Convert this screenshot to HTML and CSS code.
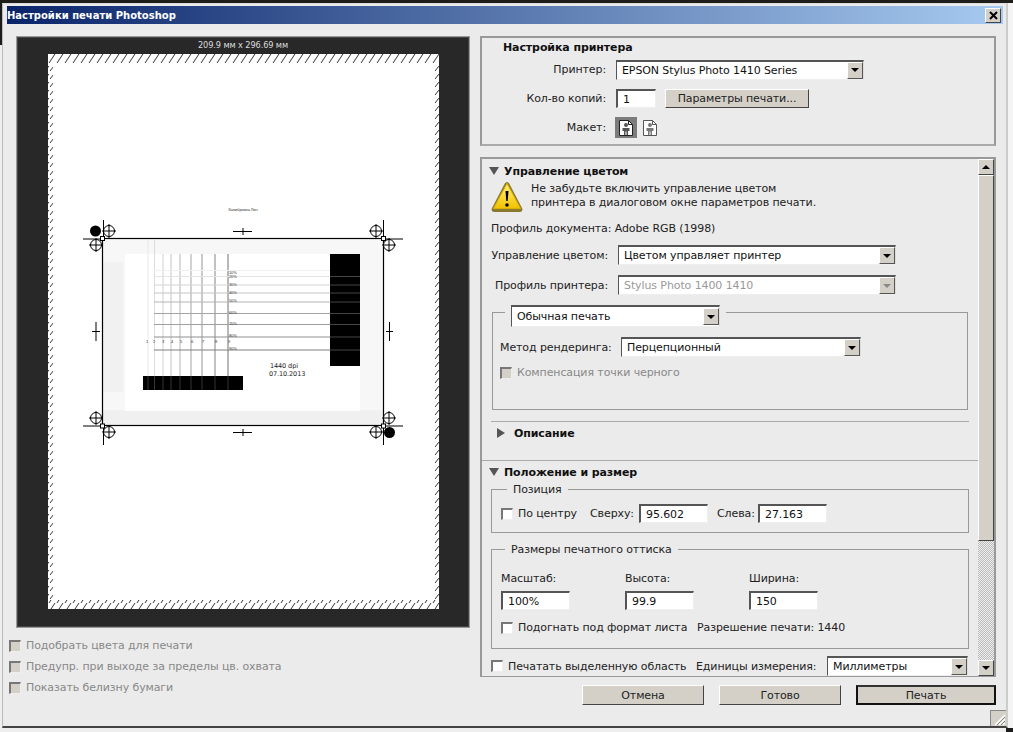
FILE: index.html
```html
<!DOCTYPE html>
<html lang="ru">
<head>
    <meta charset="UTF-8">
    <meta name="viewport" content="width=device-width, initial-scale=1.0">
    <title>Настройки печати Photoshop</title>
    <link rel="stylesheet" href="styles.css">
</head>
<body>

<div class="top-strip"></div>

<div class="window">
    <div class="title-bar">
        <span class="title-text">Настройки печати Photoshop</span>
        <div class="close-btn">
            <svg width="9" height="9" viewBox="0 0 9 9"><path d="M1 1L8 8M8 1L1 8" stroke="#000" stroke-width="2"/></svg>
        </div>
    </div>

    <div class="main">
        <!-- Предпросмотр -->
        <div class="left-col">
            <div class="preview">
                <div class="preview-size">209.9 мм x 296.69 мм</div>
                <svg class="paper" width="391" height="555" viewBox="48 54 391 555">
                    <defs>
                        <pattern id="hatchH" x="48" y="54" width="8" height="9" patternUnits="userSpaceOnUse">
                            <path d="M1 9L7 0" stroke="#000" stroke-width="0.800"/>
                        </pattern>
                        <pattern id="hatchV" x="0" y="64" width="5" height="8" patternUnits="userSpaceOnUse">
                            <path d="M0 7L4 2" stroke="#000" stroke-width="0.800"/>
                        </pattern>
                        <g id="cross">
                            <circle r="5.500" fill="#fff" stroke="#000"/>
                            <path d="M-7 0H7M0 -7V7" stroke="#000"/>
                        </g>
                        <rect id="corner" x="-2" y="-2" width="4" height="4" fill="#fff" stroke="#000"/>
                    </defs>

                    <rect x="48" y="54" width="391" height="555" fill="#fff"/>
                    <rect x="48" y="54" width="391" height="9" fill="url(#hatchH)"/>
                    <rect x="48" y="600" width="391" height="9" fill="url(#hatchH)"/>
                    <rect x="48" y="64" width="5" height="536" fill="url(#hatchV)"/>
                    <rect x="434" y="64" width="5" height="536" fill="url(#hatchV)"/>

                    <text class="tiny" x="243" y="211" text-anchor="middle">Калибровка-Лин</text>

                    <!-- отпечаток -->
                    <rect x="103" y="239" width="280" height="187" fill="#f7f7f7"/>
                    <rect x="103" y="262" width="20" height="130" fill="#f1f1f1"/>
                    <rect x="103" y="410" width="280" height="15" fill="#f0f0f0"/>
                    <rect x="125" y="254" width="235" height="157" fill="#fff"/>
                    <path d="M148 240V376" stroke="#e8e8e8"/>
                    <path d="M154.500 240V376" stroke="#dcdcdc"/>
                    <path d="M163 254V376" stroke="#d0d0d0"/>
                    <path d="M171 254V376" stroke="#c4c4c4"/>
                    <path d="M180 254V376" stroke="#b4b4b4"/>
                    <path d="M191 254V376" stroke="#a4a4a4"/>
                    <path d="M202 254V376" stroke="#949494"/>
                    <path d="M215 254V376" stroke="#848484"/>
                    <path d="M228 254V376" stroke="#707070"/>
                    <path d="M154 270.500H330" stroke="#f0f0f0"/>
                    <path d="M154 276.500H330" stroke="#e4e4e4"/>
                    <path d="M154 285H330" stroke="#d4d4d4"/>
                    <path d="M154 293H330" stroke="#c4c4c4"/>
                    <path d="M154 302H330" stroke="#b4b4b4"/>
                    <path d="M154 313.500H330" stroke="#a4a4a4"/>
                    <path d="M154 324.500H330" stroke="#a0a0a0"/>
                    <path d="M154 337H330" stroke="#909090"/>
                    <path d="M154 350H330" stroke="#808080"/>
                    <text class="tiny" x="146" y="343">1</text>
                    <text class="tiny" x="153" y="343">2</text>
                    <text class="tiny" x="162" y="343">3</text>
                    <text class="tiny" x="171" y="343">4</text>
                    <text class="tiny" x="180" y="343">5</text>
                    <text class="tiny" x="191" y="343">6</text>
                    <text class="tiny" x="202" y="343">7</text>
                    <text class="tiny" x="215" y="343">8</text>
                    <text class="tiny" x="228" y="343">9</text>
                    <text class="tiny" x="229" y="274">10%</text>
                    <text class="tiny" x="229" y="278">20%</text>
                    <text class="tiny" x="229" y="286">30%</text>
                    <text class="tiny" x="229" y="294">40%</text>
                    <text class="tiny" x="229" y="302">50%</text>
                    <text class="tiny" x="229" y="314">60%</text>
                    <text class="tiny" x="229" y="325">70%</text>
                    <text class="tiny" x="229" y="337">80%</text>
                    <text class="tiny" x="229" y="350">90%</text>
                    <rect x="330" y="254" width="30" height="112" fill="#000"/>
                    <path d="M330 276.500H360M330 285H360M330 293H360M330 302H360M330 313.500H360M330 324.500H360M330 337H360M330 350H360" stroke="#444"/>
                    <rect x="143" y="376" width="100" height="14" fill="#000"/>
                    <path d="M148 376V390M154.500 376V390M163 376V390M171 376V390M180 376V390M191 376V390M202 376V390M215 376V390M228 376V390" stroke="#333"/>
                    <text class="dpi" x="270" y="368">1440 dpi</text>
                    <text class="dpi" x="269" y="376">07.10.2013</text>
                    <rect x="102.500" y="238.500" width="281" height="187" fill="none" stroke="#000" stroke-width="1.200"/>

                    <!-- метки -->
                    <use href="#cross" x="109" y="231"/>
                    <use href="#cross" x="376" y="231"/>
                    <use href="#cross" x="96" y="245"/>
                    <use href="#cross" x="389" y="245"/>
                    <use href="#cross" x="96" y="418"/>
                    <use href="#cross" x="389" y="418"/>
                    <use href="#cross" x="109" y="432"/>
                    <use href="#cross" x="376" y="432"/>
                    <circle cx="95.500" cy="231" r="5.500" fill="#000"/>
                    <circle cx="389.500" cy="432.500" r="5.500" fill="#000"/>
                    <path d="M103.500 220V238M383.500 220V238M103.500 426V445M383.500 426V445M83 239H102M384 239H403M83 426H102M384 426H403" stroke="#000"/>
                    <path d="M233 231.500H252M243 228V235M233 432.500H252M243 429V436M96 322V341M92 331.500H100M389.500 322V341M386 331.500H393" stroke="#000"/>
                    <use href="#corner" x="102.500" y="238.500"/>
                    <use href="#corner" x="383.500" y="238.500"/>
                    <use href="#corner" x="102.500" y="426"/>
                    <use href="#corner" x="383.500" y="426"/>
                </svg>
            </div>
            <div class="check-row disabled"><span class="check"></span>Подобрать цвета для печати</div>
            <div class="check-row disabled"><span class="check"></span>Предупр. при выходе за пределы цв. охвата</div>
            <div class="check-row disabled"><span class="check"></span>Показать белизну бумаги</div>
        </div>

        <!-- Настройки -->
        <div class="right-col">
            <div class="printer-box">
                <div class="box-title">Настройка принтера</div>
                <div class="form-row">
                    <span class="label printer-label">Принтер:</span>
                    <div class="combo combo-printer">EPSON Stylus Photo 1410 Series<span class="arrow"></span></div>
                </div>
                <div class="form-row">
                    <span class="label printer-label">Кол-во копий:</span>
                    <div class="field field-copies">1</div>
                    <div class="btn btn-params">Параметры печати...</div>
                </div>
                <div class="form-row layout-row">
                    <span class="label printer-label">Макет:</span>
                    <div class="layout-btn selected">
                        <svg width="14" height="16" viewBox="0 0 14 16"><path d="M.5.500H9.500L13.500 4.500V15.500H.5Z" fill="#fff" stroke="#222"/><path d="M9.500.500V4.500H13.500" fill="none" stroke="#222"/><circle cx="7" cy="5" r="2" fill="#555"/><path d="M3.500 8H10.500V11H9V15H7.500V11.500H6.500V15H5V11H3.500Z" fill="#555"/></svg>
                    </div>
                    <div class="layout-btn">
                        <svg width="14" height="16" viewBox="0 0 14 16"><path d="M.5.500H9.500L13.500 4.500V15.500H.5Z" fill="#fff" stroke="#555"/><path d="M9.500.500V4.500H13.500" fill="none" stroke="#555"/><circle cx="7" cy="5" r="2" fill="#777"/><path d="M3.500 8H10.500V11H9V15H7.500V11.500H6.500V15H5V11H3.500Z" fill="#777"/></svg>
                    </div>
                </div>
            </div>

            <div class="panel">
                <div class="panel-content">
                    <div class="section-head"><span class="tri-down"></span>Управление цветом</div>
                    <div class="warning">
                        <svg width="32" height="32" viewBox="0 0 32 32">
                            <defs>
                                <linearGradient id="warnFill" x1="0" y1="0" x2="0" y2="1">
                                    <stop offset="0" stop-color="#fff27a"/>
                                    <stop offset="1" stop-color="#f2c200"/>
                                </linearGradient>
                            </defs>
                            <path d="M16 1C17 1 18 2 18.500 3L31 27C32 29 31 31 29 31H3C1 31 0 29 1 27L13.500 3C14 2 15 1 16 1Z" fill="#8a7a30"/>
                            <path d="M16 2.500L29.500 27.500H2.500Z" fill="url(#warnFill)" stroke="#e0b000" stroke-linejoin="round"/>
                            <path d="M14.500 10H17.500L16.700 20H15.300Z" fill="#000"/>
                            <circle cx="16" cy="24" r="1.800" fill="#000"/>
                        </svg>
                        <div class="warning-text">Не забудьте включить управление цветом<br>принтера в диалоговом окне параметров печати.</div>
                    </div>
                    <div class="doc-profile">Профиль документа: Adobe RGB (1998)</div>
                    <div class="form-row color-row first-color-row">
                        <span class="label color-label">Управление цветом:</span>
                        <div class="combo combo-wide">Цветом управляет принтер<span class="arrow"></span></div>
                    </div>
                    <div class="form-row color-row">
                        <span class="label color-label">Профиль принтера:</span>
                        <div class="combo combo-wide combo-off">Stylus Photo 1400 1410<span class="arrow"></span></div>
                    </div>
                    <fieldset class="group group-print">
                        <legend class="legend-combo"><div class="combo combo-mode">Обычная печать<span class="arrow"></span></div></legend>
                        <div class="form-row render-row">
                            <span class="label render-label">Метод рендеринга:</span>
                            <div class="combo combo-render">Перцепционный<span class="arrow"></span></div>
                        </div>
                        <div class="check-row disabled black-row"><span class="check"></span>Компенсация точки черного</div>
                    </fieldset>
                    <div class="sub-section">
                        <div class="section-head sub-head"><span class="tri-right"></span>Описание</div>
                    </div>
                    <div class="section-two">
                        <div class="section-head"><span class="tri-down"></span>Положение и размер</div>
                        <fieldset class="group group-pos">
                            <legend>Позиция</legend>
                            <div class="pos-row">
                                <span class="check white"></span><span class="pos-center">По центру</span>
                                <span class="pos-top">Сверху:</span><div class="field field-num">95.602</div>
                                <span class="pos-left">Слева:</span><div class="field field-num">27.163</div>
                            </div>
                        </fieldset>
                        <fieldset class="group group-size">
                            <legend>Размеры печатного оттиска</legend>
                            <div class="size-grid">
                                <div class="size-item"><span>Масштаб:</span><div class="field field-num">100%</div></div>
                                <div class="size-item"><span>Высота:</span><div class="field field-num">99.9</div></div>
                                <div class="size-item"><span>Ширина:</span><div class="field field-num">150</div></div>
                            </div>
                            <div class="pos-row fit-row">
                                <span class="check white"></span><span class="fit-text">Подогнать под формат листа</span>
                                <span>Разрешение печати: 1440</span>
                            </div>
                        </fieldset>
                        <div class="units-row">
                            <span class="check white"></span><span class="area-text">Печатать выделенную область</span>
                            <span class="units-label">Единицы измерения:</span>
                            <div class="combo combo-units">Миллиметры<span class="arrow"></span></div>
                        </div>
                    </div>
                </div>
                <div class="scrollbar">
                    <div class="scroll-btn"><span class="arrow-up"></span></div>
                    <div class="scroll-thumb"></div>
                    <div class="scroll-track"></div>
                    <div class="scroll-btn"><span class="arrow-down"></span></div>
                </div>
            </div>

            <div class="buttons">
                <div class="btn btn-main">Отмена</div>
                <div class="btn btn-main">Готово</div>
                <div class="btn btn-main btn-default">Печать</div>
            </div>
        </div>
    </div>

    <!-- Уголок окна -->
    <div class="grip">
        <svg width="15" height="15" viewBox="0 0 15 15"><path d="M14 4L4 14M14 8L8 14M14 12L12 14" stroke="#fff" stroke-width="1.500"/><path d="M14 6L6 14M14 10L10 14" stroke="#888"/></svg>
    </div>
</div>

<div class="bottom-strip"></div>

</body>
</html>
```
FILE: styles.css
```css
/* Общие стили */
html, body {
    margin: 0;
    padding: 0;
}

body {
    width: 1013px;
    height: 732px;
    overflow: hidden;
    background: #1c1c1c;
    font-family: "DejaVu Sans", sans-serif;
    font-size: 11px;
    letter-spacing: -0.1px;
    white-space: nowrap;
    color: #222;
}

.top-strip {
    height: 3px;
    background: #1f1d1a;
}

.bottom-strip {
    height: 4px;
    width: 965px;
    background: repeating-linear-gradient(90deg, #aaa 0, #aaa 1px, #eee 1px, #eee 7px);
}

/* Окно */
.window {
    position: relative;
    box-sizing: border-box;
    width: 1006px;
    height: 725px;
    margin-left: 2px;
    padding: 2px 3px 0 4px;
    background: #ebebeb;
    border-top: 1px solid #ddd;
    border-left: 1px solid #bbb;
    border-right: 2px solid #ccc;
    border-bottom: 2px solid #444;
    box-shadow: 5px 0 0 #f4f4f4, -2px 42px 0 #eee;
}

.title-bar {
    display: flex;
    justify-content: space-between;
    align-items: center;
    height: 18px;
    background: linear-gradient(90deg, #0a246a, #a6caf0);
}

.title-text {
    color: #fff;
    font-weight: bold;
    font-size: 10px;
    letter-spacing: 0;
}

.close-btn {
    display: flex;
    justify-content: center;
    align-items: center;
    width: 14px;
    height: 13px;
    margin-right: 2px;
    background: #d4d0c8;
    border: 1px solid;
    border-color: #fff #444 #444 #fff;
}

.main {
    display: flex;
    padding-top: 12px;
}

/* Предпросмотр */
.left-col {
    width: 471px;
    padding-left: 2px;
}

.preview {
    box-sizing: border-box;
    display: flex;
    flex-direction: column;
    align-items: center;
    width: 454px;
    height: 592px;
    margin-left: 7px;
    background: #282828;
    border: 1px solid #999;
    outline: 1px solid #444;
    outline-offset: -2px;
}

.preview-size {
    height: 16px;
    padding-top: 1px;
    color: #ddd;
    font-size: 8.200px;
    line-height: 15px;
}

.paper {
    display: block;
}

.tiny {
    font-family: "Liberation Sans", sans-serif;
    font-size: 4px;
    fill: #333;
}

.dpi {
    font-family: "DejaVu Sans", sans-serif;
    font-size: 6.500px;
    fill: #222;
}

.check-row {
    display: flex;
    align-items: center;
    height: 21px;
}

.preview + .check-row {
    margin-top: 7px;
}

.disabled {
    color: #888;
}

.check {
    box-sizing: border-box;
    flex: none;
    width: 12px;
    height: 12px;
    margin-right: 5px;
    background: #d4d0c8;
    border: 2px solid;
    border-color: #777 #eee #eee #777;
    border-width: 2px 1px 1px 2px;
}

.check.white {
    background: #fff;
}

/* Настройка принтера */
.right-col {
    width: 516px;
}

.printer-box {
    box-sizing: border-box;
    height: 110px;
    padding: 2px 0 0 21px;
    border: 2px solid #999;
    border-bottom-color: #aaa;
}

.box-title {
    height: 19px;
    font-weight: bold;
    line-height: 15px;
    color: #111;
}

.form-row {
    display: flex;
    align-items: center;
}

.printer-box .form-row {
    height: 21px;
    margin-bottom: 8px;
}

.label {
    flex: none;
    text-align: right;
}

.printer-label {
    width: 103px;
    margin-right: 10px;
}

.combo {
    box-sizing: border-box;
    flex: none;
    display: flex;
    justify-content: space-between;
    align-items: center;
    height: 20px;
    padding-left: 5px;
    background: #fff;
    color: #111;
    border: 2px solid;
    border-color: #555 #ddd #eee #555;
    border-width: 2px 1px 1px 1px;
}

.arrow {
    flex: none;
    box-sizing: border-box;
    display: flex;
    justify-content: center;
    align-items: center;
    width: 16px;
    height: 17px;
    background: #d4d0c8;
    border: 1px solid;
    border-color: #fff #555 #555 #fff;
}

.arrow::after {
    content: "";
    border: 4px solid transparent;
    border-top: 4px solid #000;
    border-bottom: 0;
}

.combo-off {
    color: #999;
}

.combo-off .arrow::after {
    border-top-color: #888;
}

.combo-printer {
    width: 248px;
}

.field {
    box-sizing: border-box;
    flex: none;
    height: 19px;
    padding-left: 5px;
    background: #fff;
    color: #111;
    line-height: 17px;
    border: 1px solid #eee;
    border-top: 2px solid #555;
    border-left: 2px solid #555;
}

.field-copies {
    width: 40px;
    margin-right: 9px;
}

.btn {
    box-sizing: border-box;
    display: flex;
    justify-content: center;
    align-items: center;
    background: #d4d0c8;
    color: #222;
    border: 1px solid;
    border-color: #fff #444 #444 #fff;
}

.btn-params {
    width: 144px;
    height: 19px;
}

.layout-btn {
    box-sizing: border-box;
    display: flex;
    justify-content: center;
    align-items: center;
    width: 22px;
    height: 21px;
    margin-right: 2px;
}

.layout-btn.selected {
    margin-left: -1px;
    background: #7c7c7c;
}

/* Панель с прокруткой */
.panel {
    box-sizing: border-box;
    display: flex;
    height: 520px;
    margin-top: 11px;
    border: 2px solid #999;
    border-bottom: 1px solid #999;
    overflow: hidden;
}

.panel-content {
    box-sizing: border-box;
    width: 497px;
    padding-top: 5px;
}

.section-head {
    display: flex;
    align-items: center;
    height: 14px;
    padding-left: 7px;
    color: #111;
    font-weight: bold;
}

.tri-down {
    width: 0;
    margin-right: 5px;
    border: 5px solid transparent;
    border-top: 8px solid #555;
    border-bottom: 0;
}

.tri-right {
    width: 0;
    margin-right: 9px;
    border: 5px solid transparent;
    border-left: 8px solid #555;
    border-right: 0;
}

.warning {
    display: flex;
    padding: 3px 0 0 9px;
    height: 32px;
}

.warning-text {
    margin: 1px 0 0 8px;
    line-height: 14px;
}

.doc-profile {
    padding: 8px 0 0 9px;
    height: 15px;
    line-height: 15px;
}

.color-row {
    height: 20px;
    margin-bottom: 10px;
}

.first-color-row {
    margin-top: 9px;
}

.color-label {
    width: 126px;
    margin-right: 10px;
}

.combo-wide {
    width: 278px;
}

.group {
    box-sizing: border-box;
    margin: 0 0 0 9px;
    padding: 0;
    min-width: 0;
    border: 1px solid #999;
}

.group-print {
    width: 476px;
    height: 113px;
    margin: -8px 0 0 10px;
    padding-left: 7px;
}

.group .legend-combo {
    margin-left: 5px;
    padding: 8px 6px 0;
    line-height: 0;
}

.combo-mode {
    width: 209px;
    height: 22px;
    line-height: 14px;
}

.render-row {
    margin-top: 10px;
}

.render-label {
    width: 111px;
    margin-right: 10px;
    text-align: left;
}

.combo-render {
    width: 240px;
}

.black-row {
    margin-top: 5px;
}

.sub-section {
    box-sizing: border-box;
    height: 39px;
    margin: 11px 9px 0;
    padding-top: 4px;
    border-top: 1px solid #aaa;
}

.sub-head {
    padding-left: 6px;
}

.section-two {
    padding-top: 4px;
    border-top: 1px solid #aaa;
}

.group legend {
    margin-left: 15px;
    padding: 0 6px;
}

.group-pos {
    width: 478px;
    height: 50px;
    margin-top: 4px;
}

.group-pos .pos-row {
    margin-top: 8px;
}

.pos-row {
    display: flex;
    align-items: center;
    padding-left: 9px;
}

.pos-center {
    width: 72px;
}

.pos-top {
    width: 49px;
}

.pos-left {
    width: 41px;
}

.field-num {
    width: 69px;
    margin-right: 9px;
}

.group-size {
    width: 478px;
    height: 106px;
    margin-top: 10px;
}

.group-size legend {
    margin-left: 13px;
}

.size-grid {
    display: flex;
    padding: 16px 0 0 9px;
}

.size-item {
    display: flex;
    flex-direction: column;
    gap: 6px;
    width: 124px;
}

.fit-row {
    margin-top: 11px;
}

.fit-text {
    width: 179px;
}

.units-row {
    display: flex;
    align-items: center;
    height: 20px;
    margin-top: 7px;
    padding-left: 9px;
}

.area-text {
    width: 188px;
}

.units-label {
    width: 131px;
}

.combo-units {
    width: 141px;
}

/* Полоса прокрутки */
.scrollbar {
    display: flex;
    flex-direction: column;
    width: 16px;
}

.scroll-btn {
    box-sizing: border-box;
    display: flex;
    justify-content: center;
    align-items: center;
    height: 16px;
    background: #d4d0c8;
    border: 1px solid;
    border-color: #fff #444 #444 #fff;
}

.arrow-up {
    border: 4px solid transparent;
    border-bottom: 4px solid #000;
    border-top: 0;
}

.arrow-down {
    border: 4px solid transparent;
    border-top: 4px solid #000;
    border-bottom: 0;
}

.scroll-thumb {
    box-sizing: border-box;
    height: 366px;
    background: #d4d0c8;
    border: 1px solid;
    border-color: #fff #444 #444 #fff;
}

.scroll-track {
    flex: 1;
    background: repeating-conic-gradient(#eee 0 25%, #bbb 0 50%) 0 0 / 2px 2px;
}

/* Кнопки */
.buttons {
    display: flex;
    justify-content: flex-end;
    gap: 15px;
    margin-top: 8px;
}

.btn-main {
    width: 122px;
    height: 20px;
}

.btn-default {
    width: 140px;
    border: 2px solid #111;
    border-top-color: #333;
}

.grip {
    position: absolute;
    right: 0;
    bottom: 0;
    width: 15px;
    height: 15px;
    background: #d4d0c8;
    border-top: 1px solid #888;
    border-left: 1px solid #888;
}
```
